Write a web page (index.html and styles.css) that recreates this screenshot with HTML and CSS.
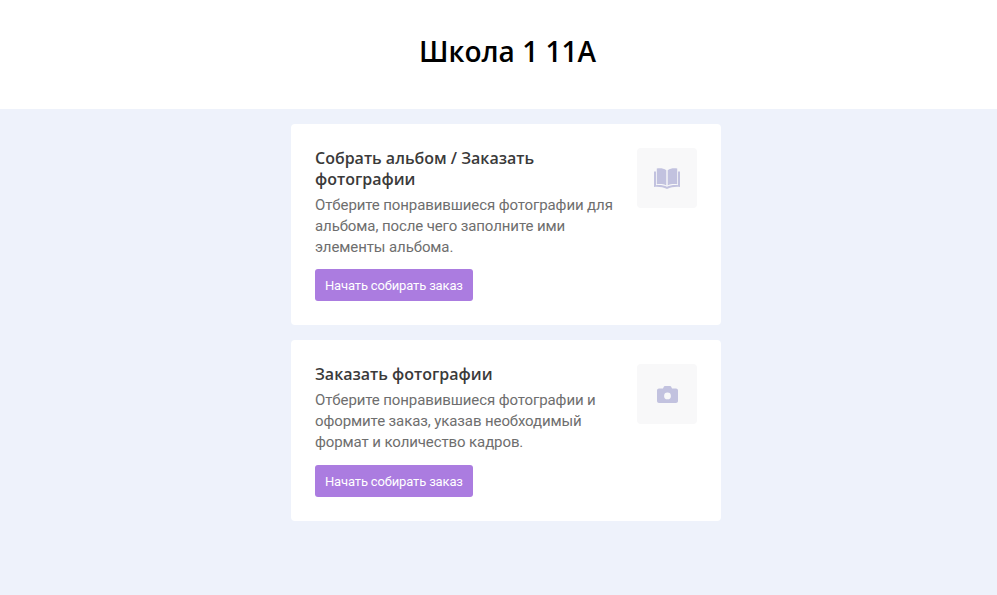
FILE: index.html
```html
<!DOCTYPE html>
<html lang="ru">
<head>
    <meta charset="UTF-8">
    <title>Школа 1 11А</title>
    <link rel="stylesheet" href="styles.css">
</head>
<body>
<header class="page-header">
    <h1>Школа 1 11А</h1>
</header>

<main class="cards">
    <section class="card">
        <div class="card-text">
            <h2>Собрать альбом / Заказать фотографии</h2>
            <p>Отберите понравившиеся фотографии для альбома, после чего заполните ими элементы альбома.</p>
            <a class="btn" href="#">Начать собирать заказ</a>
        </div>
        <div class="card-icon">
            <svg width="26" height="21" viewBox="0 0 26 21">
                <path fill="#c2c2df" d="M2.800 .6C6 0 9.800.5 12.300 2.200V17.400C9.800 16 6 15.700 2.800 16.200ZM23.200 .6C20 0 16.200.5 13.700 2.200V17.400C16.200 16 20 15.700 23.200 16.200Z"/>
                <path fill="#c2c2df" d="M0 3.500H2V17.200C5.500 16.700 10 17.200 13 18.800C16 17.200 20.500 16.700 24 17.200V3.500H26V19C22 18.500 17 19 13 21C9 19 4 18.500 0 19Z"/>
            </svg>
        </div>
    </section>

    <section class="card">
        <div class="card-text">
            <h2>Заказать фотографии</h2>
            <p>Отберите понравившиеся фотографии и оформите заказ, указав необходимый формат и количество кадров.</p>
            <a class="btn" href="#">Начать собирать заказ</a>
        </div>
        <div class="card-icon">
            <svg width="21" height="17" viewBox="0 0 21 17">
                <path fill="#c2c2df" fill-rule="evenodd" d="M2 2.500H6L6.800.8C7 .3 7.400 0 8 0H13C13.600 0 14 .3 14.200.8L15 2.500H19C20.100 2.500 21 3.400 21 4.500V15C21 16.100 20.100 17 19 17H2C.9 17 0 16.100 0 15V4.500C0 3.400.9 2.500 2 2.500ZM10.500 6.500A3.400 3.400 0 1 0 10.500 13.300A3.400 3.400 0 1 0 10.500 6.500Z"/>
            </svg>
        </div>
    </section>
</main>
</body>
</html>
```

FILE: styles.css
```css
html, body {
    height: 100%;
}

body {
    margin: 0;
    background-color: #eef2fb;
    font-family: "Open Sans", sans-serif;
}

.page-header {
    background-color: #fff;
    height: 109px;
    padding: 0 0 8px 18px;
    box-sizing: border-box;
    display: flex;
    align-items: center;
    justify-content: center;
}

h1 {
    margin: 0;
    font-size: 28px;
    font-weight: 600;
    color: #000;
}

.cards {
    width: 430px;
    padding-top: 15px;
    margin-left: 291px;
    display: flex;
    flex-direction: column;
    gap: 15px;
}

.card {
    display: flex;
    justify-content: space-between;
    align-items: flex-start;
    background-color: #fff;
    border-radius: 4px;
    padding: 24px;
}

.card-text {
    width: 300px;
}

h2 {
    margin: 0 0 5.400px;
    font-size: 16px;
    line-height: 20.8px;
    font-weight: 600;
    color: #3a3a3a;
}

p {
    margin: 0 0 11.300px;
    font-family: "Roboto", sans-serif;
    font-size: 15px;
    line-height: 21px;
    letter-spacing: -0.1px;
    color: #6e6e6e;
}

.btn {
    display: inline-block;
    background-color: #ab7ce0;
    color: #fff;
    border-radius: 3px;
    padding: 1px 10px 0;
    font-family: "Roboto", sans-serif;
    font-size: 13px;
    letter-spacing: -0.15px;
    line-height: 31px;
    text-decoration: none;
}

.card-icon {
    width: 60px;
    height: 60px;
    background-color: #f8f8f9;
    border-radius: 4px;
    display: flex;
    align-items: center;
    justify-content: center;
}
```
